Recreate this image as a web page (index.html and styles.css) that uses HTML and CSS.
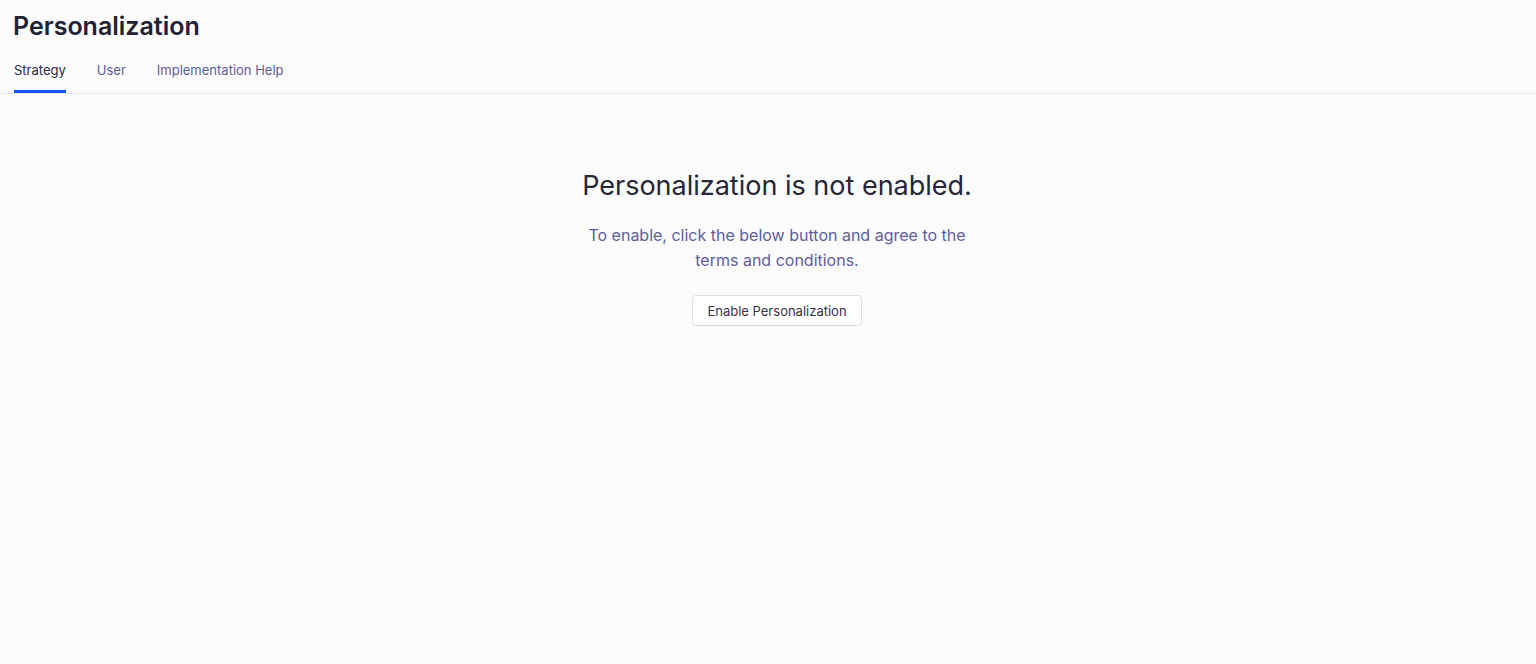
FILE: index.html
```html
<!DOCTYPE html>
<html lang="en">
<head>
<meta charset="utf-8">
<title>Personalization</title>
<link rel="stylesheet" href="styles.css">
</head>
<body>
<div class="page">
  <header class="header">
    <h1 class="title">Personalization</h1>
    <nav class="tabs">
      <a class="tab tab-active">Strategy</a>
      <a class="tab">User</a>
      <a class="tab">Implementation Help</a>
    </nav>
  </header>
  <main class="empty">
    <h2 class="empty-title">Personalization is not enabled.</h2>
    <p class="empty-text">To enable, click the below button and agree to the terms and conditions.</p>
    <button class="btn">Enable Personalization</button>
  </main>
</div>
</body>
</html>
```
FILE: styles.css
```css
html, body {
  margin: 0;
  padding: 0;
  background: #fbfbfb;
  font-family: Inter, "Noto Sans", sans-serif;
  color: #212134;
}
.page {
  min-height: 664px;
}
.header {
  border-bottom: 1px solid #e9e9ee;
}
.title {
  margin: 0;
  padding: 8px 0 0 13px;
  font-size: 25px;
  line-height: 36px;
  font-weight: 600;
  color: #212134;
}
.tabs {
  display: flex;
  gap: 31px;
  padding: 18px 0 0 14px;
}
.tab {
  font-size: 13px;
  line-height: 16px;
  color: #5e5e9a;
  padding-bottom: 12px;
  border-bottom: 3px solid transparent;
}
.tab-active {
  color: #2a2a3c;
  border-bottom-color: #1553ff;
}
.empty {
  display: flex;
  flex-direction: column;
  align-items: center;
  padding-top: 74px;
  padding-left: 18px;
}
.empty-title {
  margin: 0;
  font-size: 27px;
  line-height: 36px;
  font-weight: 400;
  color: #262637;
}
.empty-text {
  margin: 19px 0 0;
  max-width: 400px;
  text-align: center;
  font-size: 16px;
  line-height: 25px;
  color: #5e5e9e;
}
.btn {
  margin-top: 22px;
  height: 31px;
  padding: 0 14px;
  background: #ffffff;
  border: 1px solid #dedee6;
  border-radius: 4px;
  font-family: Inter, "Noto Sans", sans-serif;
  font-size: 13px;
  color: #32324a;
}
```
